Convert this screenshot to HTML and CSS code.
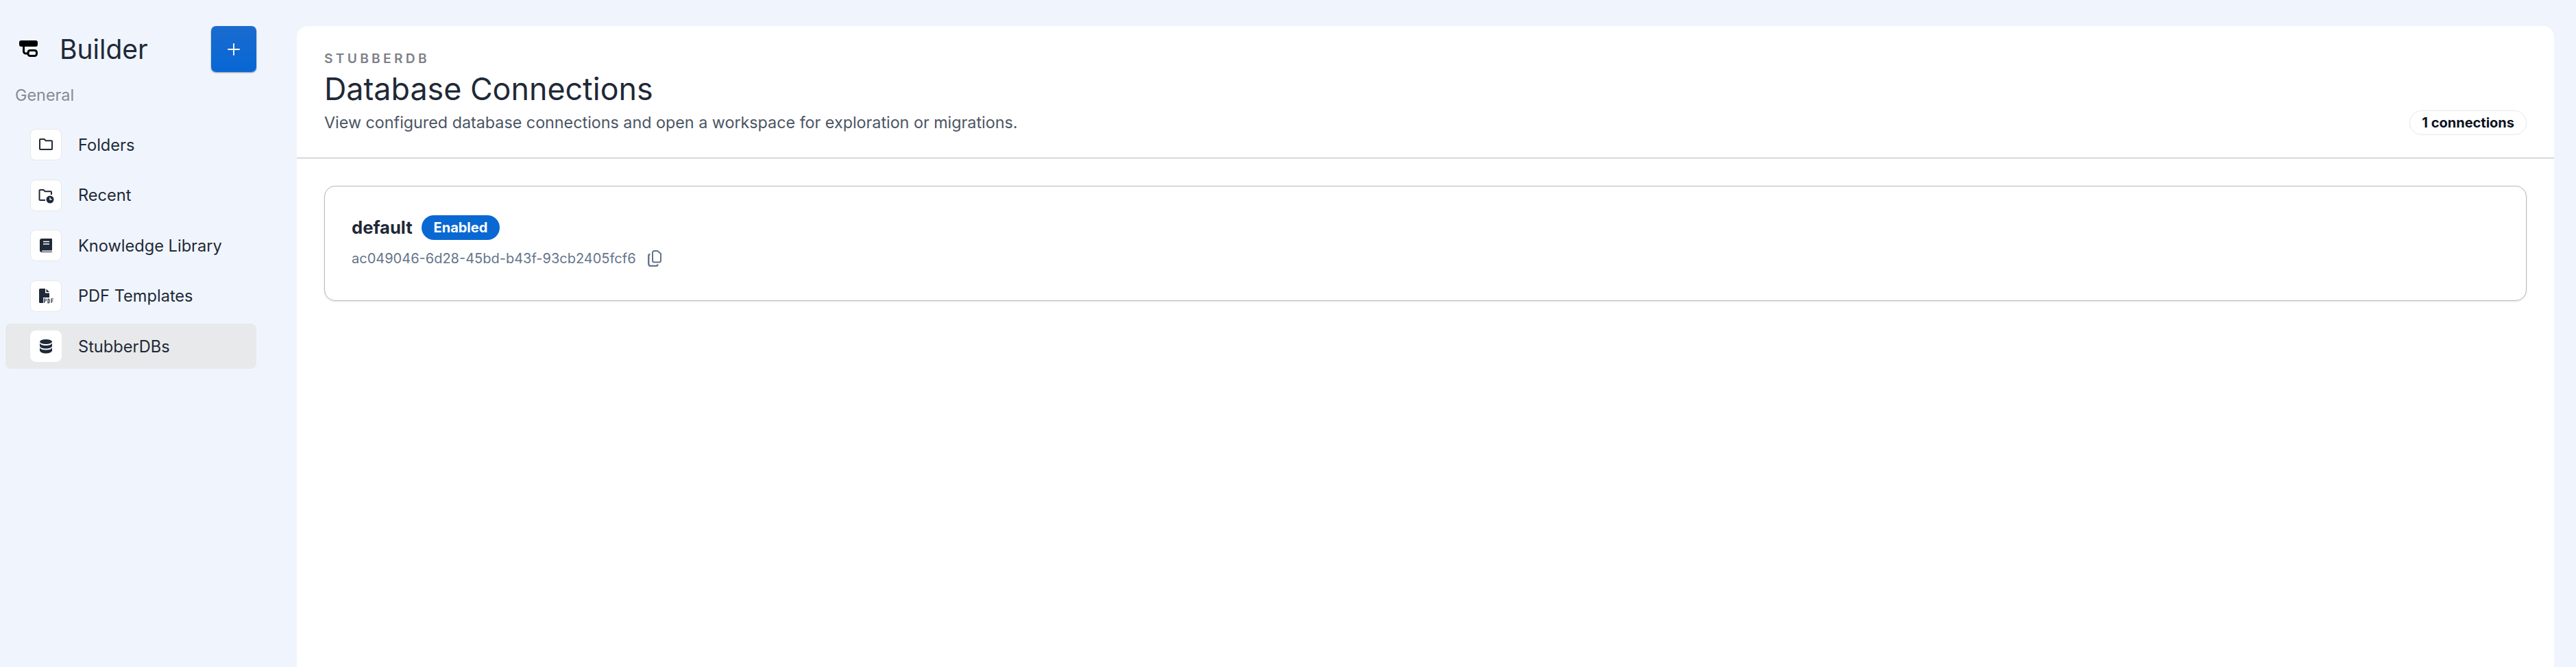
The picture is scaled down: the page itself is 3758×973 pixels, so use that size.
FILE: index.html
```html
<!DOCTYPE html>
<html lang="en">
<head>
<meta charset="utf-8">
<title>Builder</title>
<link rel="stylesheet" href="styles.css">
</head>
<body>
<div class="app">
  <aside class="sidebar">
    <div class="brand">
      <svg class="logo" viewBox="0 0 27 24"><rect x="0" y="0" width="27" height="9" rx="3" fill="#000"/><path d="M6.500 8v8a3 3 0 0 0 3 3H13" fill="none" stroke="#000" stroke-width="3"/><rect x="13" y="14.500" width="12.500" height="8" rx="3" fill="none" stroke="#000" stroke-width="3"/></svg>
      <span class="brand-name">Builder</span>
      <button class="add-btn" type="button"><svg viewBox="0 0 24 24"><path d="M12 2.500v19M2.500 12h19" stroke="#fff" stroke-width="2" fill="none"/></svg></button>
    </div>
    <div class="section-label">General</div>
    <nav class="nav">
      <a class="nav-item"><span class="nav-icon"><svg viewBox="0 0 24 24"><path d="M4 4h5.500l2.200 2.200H20a1 1 0 0 1 1 1V18a1 1 0 0 1-1 1H4a1 1 0 0 1-1-1V5a1 1 0 0 1 1-1z" fill="none" stroke="#1f2937" stroke-width="2" stroke-linejoin="round"/></svg></span><span>Folders</span></a>
      <a class="nav-item"><span class="nav-icon"><svg viewBox="0 0 24 24"><path d="M11 19H3.500a1 1 0 0 1-1-1V5a1 1 0 0 1 1-1h5l2.200 2.200H19a1 1 0 0 1 1 1V11" fill="none" stroke="#1f2937" stroke-width="2"/><circle cx="18" cy="18" r="5.500" fill="#1f2937"/><path d="M18 15v3h2.500" stroke="#fff" stroke-width="1.300" fill="none"/></svg></span><span>Recent</span></a>
      <a class="nav-item"><span class="nav-icon"><svg viewBox="0 0 24 24"><path d="M6 2h14a1 1 0 0 1 1 1v15.500a1 1 0 0 1-1 1H6.500a.8.8 0 0 0 0 1.400H21V22H6a3 3 0 0 1-3-3V5a3 3 0 0 1 3-3z" fill="#1f2937"/><path d="M8 6.500h9M8 10h9" stroke="#fff" stroke-width="1.400"/></svg></span><span>Knowledge Library</span></a>
      <a class="nav-item"><span class="nav-icon"><svg viewBox="0 0 24 24"><path d="M3.500 1H11v6.500h6V14H8v8H3.500A1.500 1.500 0 0 1 2 20.500v-18A1.500 1.500 0 0 1 3.500 1z" fill="#1f2937"/><path d="M12.500 1.500l4.500 4.500h-4.500z" fill="#1f2937"/><path d="M9.500 22v-6h1.500a1.500 1.500 0 0 1 0 3H9.500M15 16v6h.8a1.200 1.200 0 0 0 1.200-1.200v-3.600a1.200 1.200 0 0 0-1.200-1.200zM23 16h-3v6M20 19h2.500" fill="none" stroke="#1f2937" stroke-width="1.100"/></svg></span><span>PDF Templates</span></a>
      <a class="nav-item active"><span class="nav-icon plain"><svg viewBox="0 0 24 24"><ellipse cx="12" cy="5.500" rx="9" ry="3.500" fill="#1f2937"/><path d="M3 7.500c1 2.500 4.500 3.500 9 3.500s8-1 9-3.500V12c-1 2.500-4.500 3.500-9 3.500S4 14.500 3 12z" fill="#1f2937"/><path d="M3 14c1 2.500 4.500 3.500 9 3.500s8-1 9-3.500v4.500C20 21.200 16.500 22.500 12 22.500s-8-1.300-9-4z" fill="#1f2937"/></svg></span><span>StubberDBs</span></a>
    </nav>
  </aside>
  <main class="main">
    <header class="page-header">
      <div class="heading">
        <div class="eyebrow">STUBBERDB</div>
        <h1 class="title">Database Connections</h1>
        <p class="subtitle">View configured database connections and open a workspace for exploration or migrations.</p>
      </div>
      <span class="count-pill">1 connections</span>
    </header>
    <section class="content">
      <article class="db-card">
        <div class="db-head">
          <span class="db-name">default</span>
          <span class="badge">Enabled</span>
        </div>
        <div class="db-id">
          <span>ac049046-6d28-45bd-b43f-93cb2405fcf6</span>
          <svg class="copy" viewBox="0 0 20 24"><path d="M7 3.500A2.500 2.500 0 0 1 9.500 1H14l5 4v10a2.500 2.500 0 0 1-2.500 2.500h-7A2.500 2.500 0 0 1 7 15z" fill="none" stroke="#64748b" stroke-width="2"/><path d="M3.500 6A2.500 2.500 0 0 0 1.200 8.500V20a3 3 0 0 0 3 3H12a2.500 2.500 0 0 0 2.500-2.500" fill="none" stroke="#64748b" stroke-width="2.400"/></svg>
        </div>
      </article>
    </section>
  </main>
</div>
</body>
</html>
```
FILE: styles.css
```css
* { box-sizing: border-box; }
html, body { margin: 0; height: 100%; }
body {
  background: #f0f5fd;
  font-family: Inter, "Liberation Sans", sans-serif;
  color: #1f2937;
  overflow: hidden;
}
.app { display: flex; height: 973px; padding: 38px 32px 0 0; }
.sidebar { width: 433px; flex: none; padding: 0 59px 0 8px; }
.brand { display: flex; align-items: center; height: 67px; padding-left: 20px; }
.logo { width: 27px; height: 24px; flex: none; margin-top: -1px; }
.brand-name { font-size: 39px; line-height: 44px; margin-left: 32px; flex: 1; color: #1f2937; }
.add-btn {
  width: 66px; height: 67px; padding: 0; border: 0; border-radius: 7px;
  background: linear-gradient(#1a6bcf, #0767d4);
  box-shadow: 0 1px 2px rgba(0,0,0,.45);
  display: flex; align-items: center; justify-content: center;
}
.add-btn svg { width: 22px; height: 22px; }
.section-label { font-size: 23.400px; line-height: 30px; color: #868b94; margin: 19px 0 0 14px; }
.nav { display: flex; flex-direction: column; gap: 7.500px; margin-top: 24px; }
.nav-item {
  display: flex; align-items: center; height: 66px; padding-left: 36px; border-radius: 8px;
  font-size: 23.600px; color: #1f2937;
}
.nav-item.active { background: #e8e9eb; }
.nav-icon {
  width: 46px; height: 46px; flex: none; margin-right: 24px; border-radius: 8px;
  background: #fff; border: 1px solid #e5e7eb;
  display: flex; align-items: center; justify-content: center;
}
.nav-icon.plain { border-color: #fff; }
.nav-icon svg { width: 24px; height: 24px; }
.main { flex: 1; background: #fff; border-radius: 16px 16px 0 0; display: flex; flex-direction: column; }
.page-header {
  height: 193px; padding: 0 40px 0 40px; border-bottom: 1px solid #b4b5b8;
  display: flex; justify-content: space-between; align-items: flex-start;
}
.heading { padding-top: 35px; }
.eyebrow { font-size: 19.200px; line-height: 24px; font-weight: 600; letter-spacing: 4.300px; color: #7d8189; }
.title { margin: 7px 0 0; font-size: 44.800px; line-height: 52px; font-weight: 400; color: #1f2937; }
.subtitle { margin: 7px 0 0; font-size: 23.300px; line-height: 32px; color: #4b5563; }
.count-pill {
  margin-top: 123px; height: 36px; padding: 0 17px; border: 1px solid #e5e7eb; border-radius: 18px;
  font-size: 20px; line-height: 34px; font-weight: 700; color: #0b1220;
}
.content { padding: 40px 40px 0 40px; }
.db-card {
  height: 168px; padding: 42px 39px 0; background: #fff; border: 1px solid #b8babd; border-radius: 16px;
  box-shadow: 0 1px 3px rgba(0,0,0,.1);
}
.db-head { display: flex; align-items: center; gap: 13px; }
.db-name { font-size: 25.600px; line-height: 36px; font-weight: 700; color: #1f2937; }
.badge {
  height: 36px; padding: 0 18px; border-radius: 18px; background: #0a68d3; color: #fff;
  font-size: 20px; line-height: 36px; font-weight: 700;
}
.db-id { display: flex; align-items: center; gap: 17px; margin-top: 13px; font-size: 20px; line-height: 28px; color: #64748b; }
.copy { width: 20px; height: 24px; }
```
